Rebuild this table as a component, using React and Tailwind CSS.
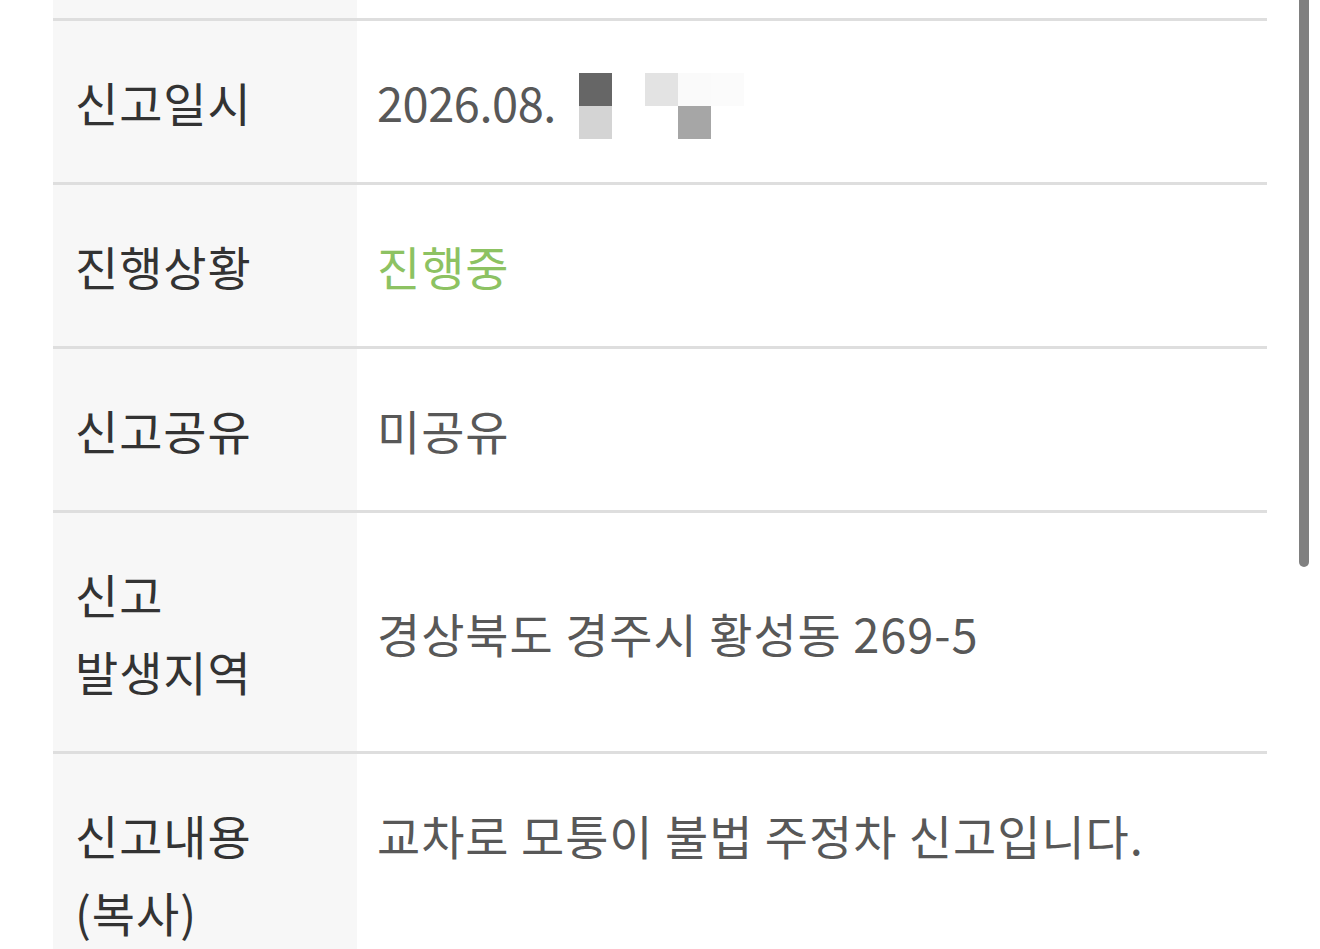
import React from 'react';

const MOSAIC = [
  ['bg-[#666666]', 'bg-white', 'bg-[#e3e3e3]', 'bg-[#fafafa]', 'bg-[#fbfbfb]'],
  ['bg-[#d4d4d4]', 'bg-white', 'bg-white', 'bg-[#a6a6a6]', 'bg-white'],
];

function Row({ label, children, align = 'items-center', last = false }) {
  return (
    <div className={`grid grid-cols-[304px_1fr] ${last ? '' : 'border-b-[3px] border-[#dedede]'}`}>
      <div className="bg-[#f7f7f7] px-[22px] py-[42px] text-[#333333]">{label}</div>
      <div className={`flex ${align} pl-[20px] pr-4 py-[42px] text-[#585858]`}>{children}</div>
    </div>
  );
}

export default function App() {
  return (
    <div
      className="relative h-[949px] w-[1320px] overflow-hidden bg-white"
      style={{ fontFamily: '"Noto Sans CJK KR", "Noto Sans", sans-serif' }}
    >
      <div className="ml-[53px] w-[1214px] text-[47px] leading-[77px] tracking-[0.02em]">
        {/* partial row above */}
        <div className="grid h-[21px] grid-cols-[304px_1fr] border-b-[3px] border-[#dedede]">
          <div className="bg-[#f7f7f7]" />
          <div />
        </div>

        <Row label="신고일시">
          <span className="tracking-[-0.01em]">2026.08.</span>
          <div className="ml-[23px] mt-[9px] grid grid-cols-[repeat(5,33px)] grid-rows-[33px_33px]">
            {MOSAIC.flat().map((c, i) => (
              <div key={i} className={c} />
            ))}
          </div>
        </Row>

        <Row label="진행상황">
          <span className="text-[#8dc262]">진행중</span>
        </Row>

        <Row label="신고공유">미공유</Row>

        <Row
          label={
            <>
              신고
              <br />
              발생지역
            </>
          }
        >
          경상북도 경주시 황성동 269-5
        </Row>

        <Row
          align="items-start"
          last
          label={
            <>
              신고내용
              <br />
              (복사)
            </>
          }
        >
          교차로 모퉁이 불법 주정차 신고입니다.
        </Row>
      </div>

      {/* scrollbar */}
      <div className="absolute left-[1299px] top-0 h-[567px] w-[10px] rounded-b-full bg-[#808080]" />
    </div>
  );
}
